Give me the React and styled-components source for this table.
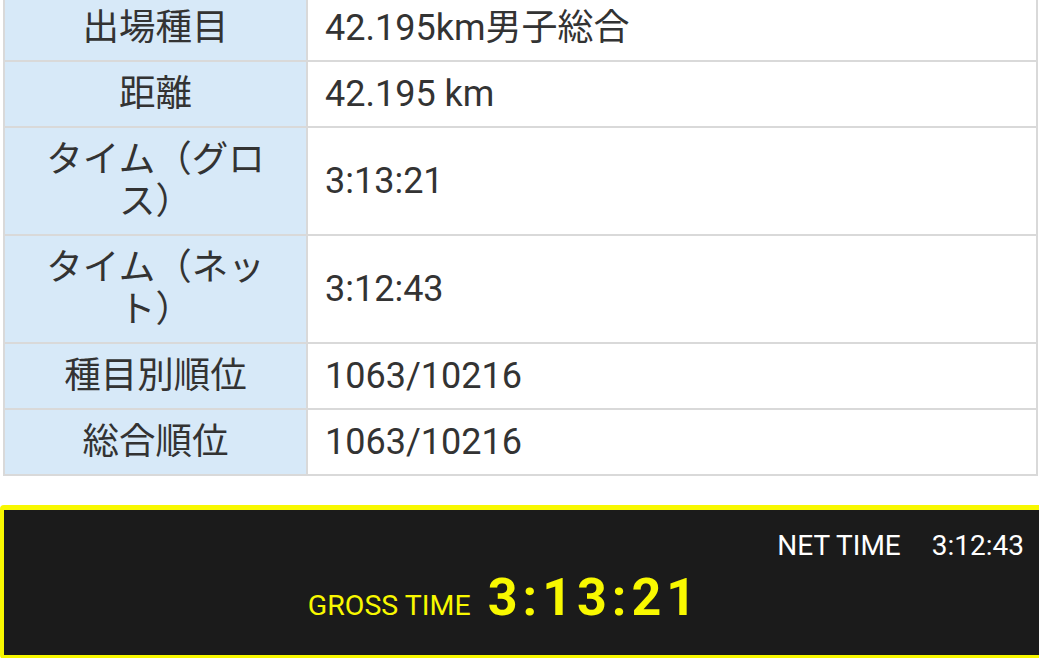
import React from 'react';
import styled, { createGlobalStyle } from 'styled-components';

const GlobalStyle = createGlobalStyle`
  html, body {
    margin: 0;
    padding: 0;
    background: #fff;
    overflow: hidden;
  }
  body {
    font-family: Roboto, "Noto Sans CJK JP", sans-serif;
  }
`;

const rows = [
  { label: '出場種目', value: '42.195km男子総合' },
  { label: '距離', value: '42.195 km' },
  { label: 'タイム（グロス）', value: '3:13:21' },
  { label: 'タイム（ネット）', value: '3:12:43' },
  { label: '種目別順位', value: '1063/10216' },
  { label: '総合順位', value: '1063/10216' },
];

const Page = styled.div`
  width: 1039px;
  height: 658px;
  overflow: hidden;
`;

const Scroller = styled.div`
  margin-top: -6px;
`;

const ResultTable = styled.table`
  margin-left: 3px;
  width: 1035px;
  border-collapse: collapse;
  border: 2px solid #d9d9d9;
  font-size: 36px;
  color: #333;
`;

const Label = styled.th`
  width: 241px;
  padding: 8px 30px 14px;
  background: #d7e9f8;
  border: 2px solid #d9d9d9;
  font-weight: 400;
  font-size: 36.5px;
  line-height: 42px;
  text-align: center;
  font-family: "Noto Sans CJK JP", sans-serif;
`;

const Value = styled.td`
  padding: 11px 17px;
  border: 2px solid #d9d9d9;
  line-height: 42px;
  font-family: Roboto, "Noto Sans CJK JP", sans-serif;
`;

const TimeBoard = styled.div`
  margin-top: 29px;
  width: 1060px;
  height: 154px;
  box-sizing: border-box;
  background: #1b1b1b;
  border: 4px solid #f8f800;
  border-top-width: 5px;
  border-radius: 4px;
  display: flex;
  flex-direction: column;
`;

const NetRow = styled.div`
  display: flex;
  justify-content: flex-end;
  gap: 31px;
  padding: 18px 32px 0 0;
  color: #fff;
  font-size: 28px;
  line-height: 36px;
`;

const GrossRow = styled.div`
  display: flex;
  justify-content: center;
  align-items: baseline;
  gap: 17px;
  padding: 4px 51px 0 0;
  color: #f8f800;
`;

const GrossLabel = styled.span`
  font-size: 28.5px;
`;

const GrossTime = styled.span`
  font-size: 52px;
  font-weight: 700;
  letter-spacing: 5px;
  line-height: 60px;
`;

export default function App() {
  return (
    <Page>
      <GlobalStyle />
      <Scroller>
        <ResultTable>
          <tbody>
            {rows.map((r) => (
              <tr key={r.label}>
                <Label>{r.label}</Label>
                <Value>{r.value}</Value>
              </tr>
            ))}
          </tbody>
        </ResultTable>
        <TimeBoard>
          <NetRow>
            <span>NET TIME</span>
            <span>3:12:43</span>
          </NetRow>
          <GrossRow>
            <GrossLabel>GROSS TIME</GrossLabel>
            <GrossTime>3:13:21</GrossTime>
          </GrossRow>
        </TimeBoard>
      </Scroller>
    </Page>
  );
}
